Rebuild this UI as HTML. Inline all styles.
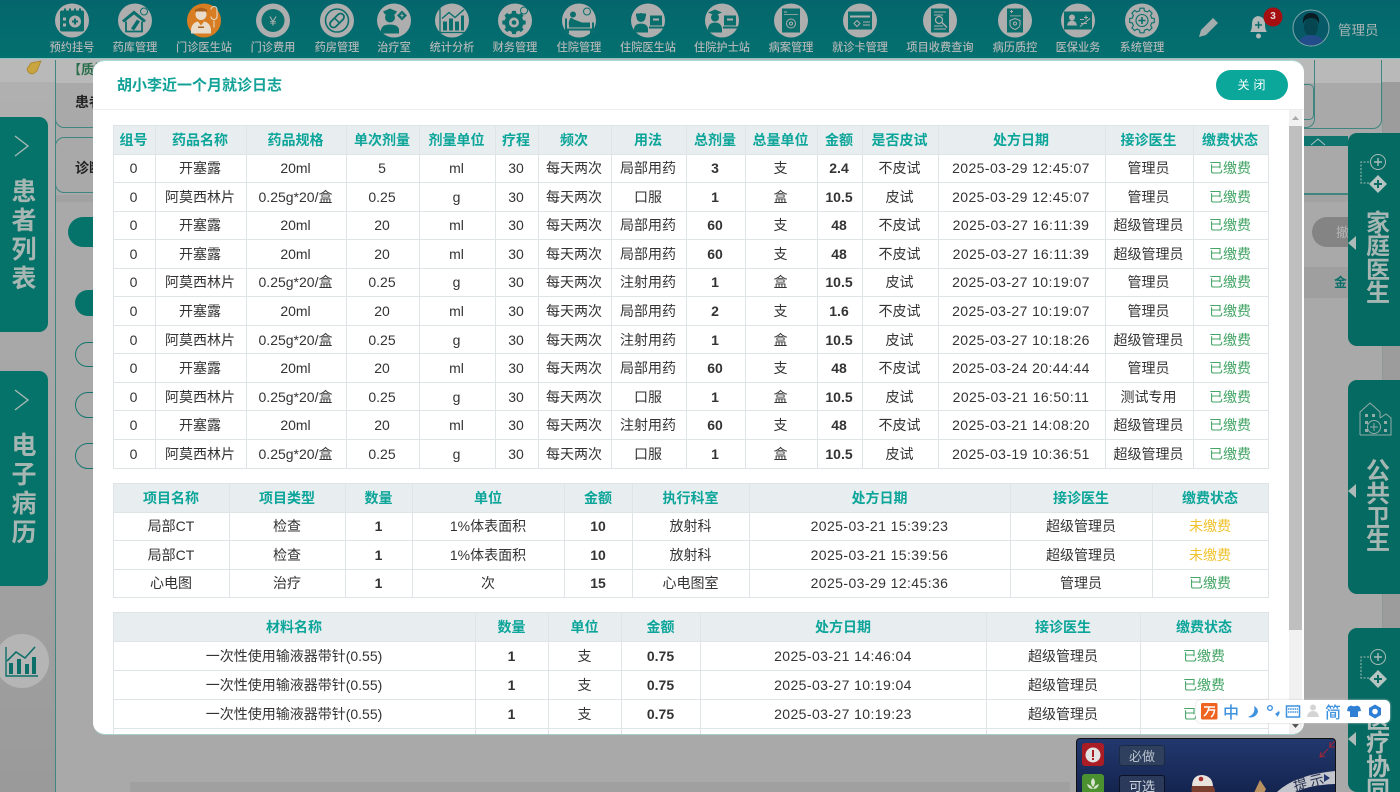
<!DOCTYPE html>
<html lang="zh"><head><meta charset="utf-8"><title>就诊日志</title>
<style>
*{box-sizing:border-box}
html{margin:0;width:1400px;height:792px;overflow:hidden;background:#a9a9a9}
body{margin:0;padding:0;width:1400px;height:792px;overflow:hidden;background:#a9a9a9;font-family:"Liberation Sans","Noto Sans CJK SC",sans-serif;filter:blur(.3px);position:relative}
.a{position:absolute}
#nav{left:0;top:0;width:1400px;height:59px;background:linear-gradient(#04666c,#04706f);border-bottom:1px solid #8fc2c0}
.lb{position:absolute;top:39px;width:110px;text-align:center;font-size:11.2px;line-height:16px;color:#b0b5b5;font-weight:500;font-family:"Noto Sans CJK SC",sans-serif;white-space:nowrap}
.side{position:absolute;background:#05736a;color:#a6b6b2;font-weight:700;text-align:center;font-family:"Noto Sans CJK SC",sans-serif}
.sl{left:0;width:48px;height:215px;border-radius:0 9px 9px 0;font-size:25px;line-height:29px;padding-top:59px}
.sr{left:1348px;width:52px;background:#056a62;border-radius:9px 0 0 9px;font-size:24px;line-height:23.4px;padding-left:8px;overflow:hidden}
.tri{position:absolute;left:1348px;width:0;height:0;border-top:7px solid transparent;border-bottom:7px solid transparent;border-right:8px solid #aebab7}
.pill{position:absolute;border:1px solid #17756f;background:#a9a9a9}
#modal{left:93px;top:60px;width:1211px;height:675px;background:#fff;border-radius:12px;overflow:hidden;border-top:1px solid #a9dcd8;border-bottom:1px solid #a7cfc9}
#title{left:24px;top:13px;font-size:15px;line-height:22px;font-weight:700;color:#12a297;font-family:"Noto Sans CJK SC",sans-serif}
#hr{left:0;top:48px;width:1211px;height:1px;background:#eceeee}
#close{left:1123px;top:9px;width:72px;height:30px;border-radius:15px;background:#0ba79b;color:#fff;text-align:center;font-size:12px;line-height:30px;letter-spacing:4px;padding-left:3px;font-family:"Noto Sans CJK SC",sans-serif}
table{position:absolute;left:20px;border-collapse:collapse;table-layout:fixed;font-size:14px;color:#333;font-family:"Liberation Sans","Noto Sans CJK SC",sans-serif}
th,td{border:1px solid #dfe4e6;padding:0 1px 0 0;text-align:center;overflow:hidden;white-space:nowrap;line-height:20px}
.t1 th,.t1 td{padding-right:2px}
th{background:#e8edf0;color:#0ca599;font-weight:700;font-size:14px;font-family:"Noto Sans CJK SC",sans-serif;height:28.5px}
td{height:28.55px}
.t3 td{height:29.1px}
td.b{font-weight:700}
td.d{letter-spacing:.41px}
td.g{color:#44a566}
td.y{color:#f0c22e}
</style></head><body>

<div class="a" style="left:0;top:59px;width:1400px;height:24px;background:#b9b9b9"></div>
<div class="a" style="left:0;top:82px;width:55px;height:710px;background:linear-gradient(#b0b0b0,#9a9a9a)"></div>
<div class="a" style="left:55px;top:82px;width:1px;height:710px;background:#3f8580"></div>
<div class="a" style="left:1382px;top:82px;width:18px;height:710px;background:#9c9c9c;border-left:1px solid #8c9a98"></div>
<div class="a" style="left:56px;top:195px;width:1325px;height:7px;background:#a2a2a2"></div>

<svg class="a" style="left:26px;top:60px" width="16" height="16" viewBox="0 0 16 16"><path d="M15 1 L5 3 L1 9 Q2 14 7 14 L11 11 Z" fill="#c9a43f" stroke="#a5832a" stroke-width=".7"/></svg>
<div class="a" style="left:68px;top:60px;font-size:13px;line-height:18px;color:#2b6e4c;font-weight:700;font-family:'Noto Sans CJK SC',sans-serif">【质控</div>
<div class="pill" style="left:55px;top:60px;width:1260px;height:68px;border-radius:0 0 9px 9px;border-top:0;background:none;border-color:#3f8580"></div>
<div class="a" style="left:75px;top:92px;font-size:14px;line-height:20px;font-weight:700;color:#222;font-family:'Noto Sans CJK SC',sans-serif">患者</div>
<div class="pill" style="left:55px;top:137px;width:60px;height:56px;border-radius:9px;background:none;border-color:#3f8580"></div>
<div class="a" style="left:75px;top:158px;font-size:14px;line-height:20px;font-weight:700;color:#222;font-family:'Noto Sans CJK SC',sans-serif">诊断</div>
<div class="a" style="left:1304px;top:84px;width:10px;height:36px;border:1px solid #3f8580;border-left:0;border-radius:0 5px 5px 0"></div>
<div class="a" style="left:1304px;top:60px;width:78px;height:69px;border:1px solid #3f8580;border-left:0;border-top:0;border-radius:0 0 9px 0"></div>
<div class="a" style="left:1304px;top:136px;width:44px;height:10px;background:#0f736e"></div>
<svg class="a" style="left:1310px;top:137px" width="16" height="9"><path d="M1 8 L8 2 L15 8" fill="none" stroke="#a9c2bf" stroke-width="1"/></svg>
<div class="a" style="left:1304px;top:193px;width:45px;height:2px;background:#3f8580"></div>
<div class="a" style="left:1312px;top:217px;width:50px;height:30px;border-radius:15px;background:#848484;color:#b5b5b5;font-size:13px;line-height:30px;padding-left:24px;font-family:'Noto Sans CJK SC',sans-serif;overflow:hidden">撤</div>
<div class="a" style="left:1304px;top:267px;width:45px;height:31px;background:#9f9f9f;color:#0d6f69;font-size:13px;line-height:30px;padding-left:30px;font-weight:700;font-family:'Noto Sans CJK SC',sans-serif;overflow:hidden">金</div>

<div class="a" style="left:68px;top:217px;width:40px;height:30px;border-radius:15px;background:#05736a"></div>
<div class="a" style="left:75px;top:290px;width:40px;height:26px;border-radius:13px;background:#05736a"></div>
<div class="pill" style="left:75px;top:342px;width:40px;height:25px;border-radius:13px"></div>
<div class="pill" style="left:75px;top:392px;width:40px;height:26px;border-radius:13px"></div>
<div class="pill" style="left:75px;top:443px;width:40px;height:26px;border-radius:13px"></div>

<div class="side sl" style="top:117px">患<br>者<br>列<br>表</div>
<svg class="a" style="left:13px;top:134px" width="18" height="24"><path d="M2 2 L15 12 L2 22" fill="none" stroke="#a4b8b4" stroke-width="1.4"/></svg>
<div class="side sl" style="top:371px">电<br>子<br>病<br>历</div>
<svg class="a" style="left:13px;top:388px" width="18" height="24"><path d="M2 2 L15 12 L2 22" fill="none" stroke="#a4b8b4" stroke-width="1.4"/></svg>
<svg class="a" style="left:0;top:633px" width="50" height="56" viewBox="0 0 50 56"><circle cx="22" cy="28" r="27" fill="#b5b5b5"/><path d="M6 14 V43 H38" fill="none" stroke="#0d6f69" stroke-width="1.4"/><path d="M9 41 V30 h4 v11zM17 41 V26 h4 v15zM25 41 V31 h4 v10zM32 41 V24 h4 v17z" fill="#0d6f69"/><path d="M7 28 L16 19 L25 25 L35 14" fill="none" stroke="#0d6f69" stroke-width="1.6"/></svg>

<div class="side sr" style="top:133px;height:213px;padding-top:76px">家<br>庭<br>医<br>生</div>
<svg class="a" style="left:1358px;top:150px" width="40" height="48" viewBox="0 0 40 48" fill="none" stroke="#a8bdb9"><circle cx="20" cy="12" r="7.5"/><path d="M16 12h8M20 8v8" stroke-width="1.4"/><path d="M11 12 H3 V33 H11" stroke-dasharray="2 1.5"/><path d="M20 25 L29 34 L20 43 L11 34Z" fill="#b6c4c1" stroke="none"/><path d="M16 34h8M20 30v8" stroke="#056a62" stroke-width="2"/></svg>
<div class="tri" style="top:236px"></div>
<div class="side sr" style="top:380px;height:214px;padding-top:77px">公<br>共<br>卫<br>生</div>
<svg class="a" style="left:1358px;top:400px" width="36" height="40" viewBox="0 0 36 40" fill="none" stroke="#93aca8"><path d="M2 35 V12 L12 3 L22 12 V18 M22 18 L28 14 L33 18 V35 H2"/><circle cx="16" cy="27" r="6.5"/><path d="M12 27h8M16 23v8"/><path d="M7 14h3v3H7zM14 14h3v3h-3zM7 21h3v3H7zM7 29h3v3H7zM26 21h3v3h-3zM26 29h3v3h-3z" fill="#93aca8" stroke="none"/></svg>
<div class="tri" style="top:484px"></div>
<div class="side sr" style="top:628px;height:164px;padding-top:78px;color:#aebcb9">医<br>疗<br>协<br>同</div>
<svg class="a" style="left:1358px;top:645px" width="40" height="48" viewBox="0 0 40 48" fill="none" stroke="#a8bdb9"><circle cx="20" cy="12" r="7.5"/><path d="M16 12h8M20 8v8" stroke-width="1.4"/><path d="M11 12 H3 V33 H11" stroke-dasharray="2 1.5"/><path d="M20 25 L29 34 L20 43 L11 34Z" fill="#b6c4c1" stroke="none"/><path d="M16 34h8M20 30v8" stroke="#056a62" stroke-width="2"/></svg>
<div class="tri" style="top:732px"></div>

<div id="nav" class="a">
<svg class="a" style="left:0;top:0" width="1400" height="48" viewBox="0 0 1400 48">
<g fill="#aeaeae"><circle cx="72" cy="20.5" r="17"/><circle cx="135" cy="20.5" r="17"/><circle cx="204" cy="20.5" r="17" fill="#d87d21"/><circle cx="273" cy="20.5" r="17"/><circle cx="337" cy="20.5" r="17"/><circle cx="394" cy="20.5" r="17"/><circle cx="452" cy="20.5" r="17"/><circle cx="515" cy="20.5" r="17"/><circle cx="579" cy="20.5" r="17"/><circle cx="648" cy="20.5" r="17"/><circle cx="722" cy="20.5" r="17"/><circle cx="791" cy="20.5" r="17"/><circle cx="860" cy="20.5" r="17"/><circle cx="940" cy="20.5" r="17"/><circle cx="1015" cy="20.5" r="17"/><circle cx="1078" cy="20.5" r="17"/><circle cx="1142" cy="20.5" r="17"/></g>
<g fill="#0a6f6c" stroke="none">
<g transform="translate(72 20.5)"><path d="M-12-8a2 2 0 0 1 2-2h20a2 2 0 0 1 2 2v17a2 2 0 0 1-2 2h-20a2 2 0 0 1-2-2z"/><path d="M-8-12h2v4h-2zM-3-12h2v4h-2zM2-12h2v4h-2zM7-12h2v4h-2z"/><circle cx="3" cy="1" r="6" fill="#aeaeae"/><path d="M0 0h6v2H0zM2 -2h2v6H2z"/><path d="M-9-3h3v3h-3zM-9 3h3v3h-3z" fill="#aeaeae"/></g>
<g transform="translate(135 20.5)"><path d="M-13 0 L-1-10 L11 0 L9 2 L-1-6 L-11 2Z"/><path d="M-9 1 V11 H7 V1" fill="none" stroke="#0a6f6c" stroke-width="1.8"/><path d="M-4 8 L2-1 L5 1 L-1 10Z"/><circle cx="9" cy="-9" r="3.5" fill="none" stroke="#0a6f6c"/></g>
<g transform="translate(204 20.5)" fill="#e9dccb"><circle cx="-3" cy="-6" r="5.5"/><path d="M-9-9h12v-2l-6-2-6 2z" fill="#a8611c"/><path d="M-13 13 V9 Q-12 2-6 1 L-3 5 L0 1 Q6 2 7 9 V13Z"/><path d="M7-11 a3 3 0 0 1 6 0 V-4 a3 3 0 0 1-6 0" fill="none" stroke="#e9dccb" stroke-width="1.100"/><path d="M10 0 V7" stroke="#e9dccb"/><path d="M-6 6h6v1.500h-6z" fill="#a8611c"/></g>
<g transform="translate(273 20.5)"><circle r="11.500"/></g>
<g transform="translate(337 20.5)"><circle r="11.500" fill="none" stroke="#0a6f6c" stroke-width="1.6"/><g transform="rotate(-45)"><rect x="-8.500" y="-3.500" width="17" height="7" rx="3.500" fill="none" stroke="#0a6f6c" stroke-width="1.8"/><path d="M0-3.500V3.500" stroke="#0a6f6c" stroke-width="1.600"/></g></g>
<g transform="translate(394 20.500)"><circle cx="-4" cy="-3" r="5"/><path d="M-11-9 L-4-12 L3-9 L1-6h-10z"/><path d="M-13 13 V9 Q-12 4-4 4 Q4 4 5 9 V13Z"/><path d="M8-10 L13-5 L8 0 L3-5Z"/><path d="M6.500-5.500h3v1h-3zM7.500-7h1v4h-1z" fill="#aeaeae"/></g>
<g transform="translate(452 20.500)"><path d="M-12-12V12H13" fill="none" stroke="#0a6f6c" stroke-width="1.300"/><path d="M-9 10V1h4v9zM-3 10V-2h4v12zM3 10V1h4v9zM9 10V-5h3v15z"/><path d="M-10-2L-3-8L3-3L12-11" fill="none" stroke="#0a6f6c" stroke-width="1.400"/></g>
<g transform="translate(515 20.500)"><path transform="translate(-1 2) scale(.95)" d="M9.700-2.400L12.300-2L12.300 2L9.700 2.400L8.600 5.200L10.100 7.300L7.300 10.100L5.200 8.600L2.400 9.700L2 12.300L-2 12.300L-2.400 9.700L-5.200 8.600L-7.300 10.100L-10.100 7.300L-8.600 5.200L-9.700 2.400L-12.300 2L-12.300-2L-9.700-2.400L-8.600-5.200L-10.100-7.300L-7.300-10.100L-5.200-8.600L-2.400-9.700L-2-12.300L2-12.300L2.400-9.700L5.200-8.600L7.300-10.100L10.100-7.300L8.600-5.200Z"/><circle cx="-1" cy="2" r="5" fill="#aeaeae"/><circle cx="-1" cy="2" r="2.300"/><circle cx="9" cy="-10" r="3.500" fill="#aeaeae" stroke="#0a6f6c"/></g>
<g transform="translate(579 20.500)"><path d="M-13-2V12h2V9H12v3h2V2" fill="none" stroke="#0a6f6c" stroke-width="2"/><path d="M-10 6 Q-11 0-8-3 L-5-1 L3 2 L11 2 V7 H-10Z"/><circle cx="-6" cy="-6" r="3"/><circle cx="8" cy="-9" r="3.500" fill="none" stroke="#0a6f6c"/></g>
<g transform="translate(648 20.500)"><circle cx="-7" cy="-3" r="4.500"/><path d="M-12-7h10v3h-10z"/><path d="M-14 12V8Q-13 3-7 3Q-1 3 0 8V12Z"/><path d="M2-5h12V5H2zM1 6h15v2H1z"/><path d="M5-2h6v2H5z" fill="#aeaeae"/></g>
<g transform="translate(722 20.500)"><circle cx="-7" cy="-3" r="4"/><path d="M-14-8L-7-11L0-8L-7-5Z"/><path d="M-14 12V8Q-13 2-7 2Q-1 2 0 8V12Z"/><path d="M2-5h12V5H2zM1 6h15v2H1z"/><path d="M5-2h6v2H5z" fill="#aeaeae"/></g>
<g transform="translate(791 20.500)"><path d="M-9-12H9V12H-9z"/><path d="M-7-9h3v1h-3zM-7-6.500H7v.7H-7z" fill="#aeaeae"/><circle cy="3" r="4.500" fill="none" stroke="#aeaeae"/><circle cy="3" r="1.500" fill="none" stroke="#aeaeae"/></g>
<g transform="translate(860 20.500)"><path d="M-12-9h24V9h-24z"/><path d="M-10-5H10v2H-10z" fill="#aeaeae"/><path d="M-6 3L-3 0L0 3L-3 6Z" fill="none" stroke="#aeaeae"/><path d="M3 1h7v1H3zM3 4h7v1H3z" fill="#aeaeae"/></g>
<g transform="translate(940 20.500)"><path d="M-9-12H9V12H-9z"/><path d="M-6-9H6v1H-6zM-6-6H3v1H-6zM-6 5H3v1H-6zM-6 8H6v1H-6z" fill="#aeaeae"/><circle cx="-1" cy="-.5" r="3.500" fill="none" stroke="#aeaeae" stroke-width="1.200"/><path d="M2 2L7 7" stroke="#aeaeae" stroke-width="1.400"/></g>
<g transform="translate(1015 20.500)"><path d="M-8-12H8V12H-8z"/><path d="M-5-9h3M-3.500-10.500v3" stroke="#aeaeae"/><path d="M-5-5H6v.8H-5z" fill="#aeaeae"/><path d="M0-2L5 0V4Q5 7 0 9Q-5 7-5 4V0Z" fill="none" stroke="#aeaeae"/><circle cy="3" r="1.500" fill="none" stroke="#aeaeae"/></g>
<g transform="translate(1078 20.500)"><path d="M-14-9H14V9H-14z"/><circle cx="-6" cy="-3" r="3" fill="#aeaeae"/><path d="M-11 5Q-10 0-6 0Q-2 0-1 5Z" fill="#aeaeae"/><path d="M2-1h4M3 3h6M8-5v4M6-3h4M2 6L12-2" stroke="#aeaeae" stroke-width="1.100"/></g>
<g transform="translate(1142 20.500)" fill="none" stroke="#0a6f6c" stroke-width="1.100"><path d="M9.700-2.400L12.300-2L12.300 2L9.700 2.400L8.600 5.200L10.100 7.300L7.300 10.100L5.200 8.600L2.400 9.700L2 12.300L-2 12.300L-2.400 9.700L-5.200 8.600L-7.300 10.100L-10.100 7.300L-8.600 5.200L-9.700 2.400L-12.300 2L-12.300-2L-9.700-2.400L-8.600-5.200L-10.100-7.300L-7.300-10.100L-5.200-8.600L-2.400-9.700L-2-12.300L2-12.300L2.400-9.700L5.200-8.600L7.300-10.100L10.100-7.300L8.600-5.200Z"/><circle r="6"/><path d="M-3.500 0h7M0-3.500v7" stroke-width="1.600"/></g>
</g>
<text x="273" y="25.500" text-anchor="middle" font-size="13" fill="#aeaeae" font-family="Liberation Sans">¥</text>
<path d="M1199 37 L1201 30 L1213 18 L1218 23 L1206 35Z" fill="#a4adad"/>
<path d="M1250 32 Q1252 30 1252 24 Q1252 17 1258 16 Q1265 17 1265 24 Q1265 30 1267 32Z" fill="#b3b8b8"/><circle cx="1258.500" cy="36" r="2.500" fill="#b3b8b8"/><path d="M1255 25h7M1258.500 21.500v7" stroke="#0a6f6c" stroke-width="1.500"/>
<circle cx="1273" cy="17" r="9.500" fill="#a50f10"/>
<circle cx="1311" cy="28" r="18" fill="#065a68" stroke="#7fa6ab" stroke-width="1"/>
<ellipse cx="1311" cy="27" rx="7" ry="9.500" fill="#064650"/><path d="M1303 24 Q1302 13 1311 13 Q1320 13 1319 24 Q1317 18 1311 18 Q1305 18 1303 24Z" fill="#0b1d24"/>
<path d="M1299 41 Q1303 35 1311 35 Q1319 35 1323 41 Q1318 45.500 1311 45.500 Q1304 45.500 1299 41Z" fill="#234d8a"/>
</svg>
<div class="a" style="left:1268px;top:10px;width:10px;text-align:center;font-size:10px;line-height:14px;font-weight:700;color:#e8d8d8">3</div>
<div class="a" style="left:1338px;top:19px;font-size:13.500px;line-height:20px;color:#aab4b5;font-family:'Noto Sans CJK SC',sans-serif">管理员</div>
<div class="lb" style="left:17px">预约挂号</div><div class="lb" style="left:80px">药库管理</div><div class="lb" style="left:149px">门诊医生站</div><div class="lb" style="left:218px">门诊费用</div><div class="lb" style="left:282px">药房管理</div><div class="lb" style="left:339px">治疗室</div><div class="lb" style="left:397px">统计分析</div><div class="lb" style="left:460px">财务管理</div><div class="lb" style="left:524px">住院管理</div><div class="lb" style="left:593px">住院医生站</div><div class="lb" style="left:667px">住院护士站</div><div class="lb" style="left:736px">病案管理</div><div class="lb" style="left:805px">就诊卡管理</div><div class="lb" style="left:885px">项目收费查询</div><div class="lb" style="left:960px">病历质控</div><div class="lb" style="left:1023px">医保业务</div><div class="lb" style="left:1087px">系统管理</div>
</div>

<div id="modal" class="a">
<div id="title" class="a">胡小李近一个月就诊日志</div>
<div id="hr" class="a"></div>
<div id="close" class="a">关闭</div>

<table class="t1" style="top:64px;width:1155px">
<colgroup><col style="width:42px"><col style="width:91px"><col style="width:100px"><col style="width:73px"><col style="width:76px"><col style="width:43px"><col style="width:73px"><col style="width:75px"><col style="width:59px"><col style="width:72px"><col style="width:45px"><col style="width:76px"><col style="width:167px"><col style="width:88px"><col style="width:75px"></colgroup>
<tr><th>组号</th><th>药品名称</th><th>药品规格</th><th>单次剂量</th><th>剂量单位</th><th>疗程</th><th>频次</th><th>用法</th><th>总剂量</th><th>总量单位</th><th>金额</th><th>是否皮试</th><th>处方日期</th><th>接诊医生</th><th>缴费状态</th></tr>
<tr><td>0</td><td>开塞露</td><td>20ml</td><td>5</td><td>ml</td><td>30</td><td>每天两次</td><td>局部用药</td><td class="b">3</td><td>支</td><td class="b">2.4</td><td>不皮试</td><td class="d">2025-03-29 12:45:07</td><td>管理员</td><td class="g">已缴费</td></tr>
<tr><td>0</td><td>阿莫西林片</td><td>0.25g*20/盒</td><td>0.25</td><td>g</td><td>30</td><td>每天两次</td><td>口服</td><td class="b">1</td><td>盒</td><td class="b">10.5</td><td>皮试</td><td class="d">2025-03-29 12:45:07</td><td>管理员</td><td class="g">已缴费</td></tr>
<tr><td>0</td><td>开塞露</td><td>20ml</td><td>20</td><td>ml</td><td>30</td><td>每天两次</td><td>局部用药</td><td class="b">60</td><td>支</td><td class="b">48</td><td>不皮试</td><td class="d">2025-03-27 16:11:39</td><td>超级管理员</td><td class="g">已缴费</td></tr>
<tr><td>0</td><td>开塞露</td><td>20ml</td><td>20</td><td>ml</td><td>30</td><td>每天两次</td><td>局部用药</td><td class="b">60</td><td>支</td><td class="b">48</td><td>不皮试</td><td class="d">2025-03-27 16:11:39</td><td>超级管理员</td><td class="g">已缴费</td></tr>
<tr><td>0</td><td>阿莫西林片</td><td>0.25g*20/盒</td><td>0.25</td><td>g</td><td>30</td><td>每天两次</td><td>注射用药</td><td class="b">1</td><td>盒</td><td class="b">10.5</td><td>皮试</td><td class="d">2025-03-27 10:19:07</td><td>管理员</td><td class="g">已缴费</td></tr>
<tr><td>0</td><td>开塞露</td><td>20ml</td><td>20</td><td>ml</td><td>30</td><td>每天两次</td><td>局部用药</td><td class="b">2</td><td>支</td><td class="b">1.6</td><td>不皮试</td><td class="d">2025-03-27 10:19:07</td><td>管理员</td><td class="g">已缴费</td></tr>
<tr><td>0</td><td>阿莫西林片</td><td>0.25g*20/盒</td><td>0.25</td><td>g</td><td>30</td><td>每天两次</td><td>注射用药</td><td class="b">1</td><td>盒</td><td class="b">10.5</td><td>皮试</td><td class="d">2025-03-27 10:18:26</td><td>超级管理员</td><td class="g">已缴费</td></tr>
<tr><td>0</td><td>开塞露</td><td>20ml</td><td>20</td><td>ml</td><td>30</td><td>每天两次</td><td>局部用药</td><td class="b">60</td><td>支</td><td class="b">48</td><td>不皮试</td><td class="d">2025-03-24 20:44:44</td><td>管理员</td><td class="g">已缴费</td></tr>
<tr><td>0</td><td>阿莫西林片</td><td>0.25g*20/盒</td><td>0.25</td><td>g</td><td>30</td><td>每天两次</td><td>口服</td><td class="b">1</td><td>盒</td><td class="b">10.5</td><td>皮试</td><td class="d">2025-03-21 16:50:11</td><td>测试专用</td><td class="g">已缴费</td></tr>
<tr><td>0</td><td>开塞露</td><td>20ml</td><td>20</td><td>ml</td><td>30</td><td>每天两次</td><td>注射用药</td><td class="b">60</td><td>支</td><td class="b">48</td><td>不皮试</td><td class="d">2025-03-21 14:08:20</td><td>超级管理员</td><td class="g">已缴费</td></tr>
<tr><td>0</td><td>阿莫西林片</td><td>0.25g*20/盒</td><td>0.25</td><td>g</td><td>30</td><td>每天两次</td><td>口服</td><td class="b">1</td><td>盒</td><td class="b">10.5</td><td>皮试</td><td class="d">2025-03-19 10:36:51</td><td>超级管理员</td><td class="g">已缴费</td></tr>
</table>

<table style="top:422px;width:1155px">
<colgroup><col style="width:116px"><col style="width:116px"><col style="width:67px"><col style="width:152px"><col style="width:68px"><col style="width:117px"><col style="width:261px"><col style="width:142px"><col style="width:116px"></colgroup>
<tr><th>项目名称</th><th>项目类型</th><th>数量</th><th>单位</th><th>金额</th><th>执行科室</th><th>处方日期</th><th>接诊医生</th><th>缴费状态</th></tr>
<tr><td>局部CT</td><td>检查</td><td class="b">1</td><td>1%体表面积</td><td class="b">10</td><td>放射科</td><td class="d">2025-03-21 15:39:23</td><td>超级管理员</td><td class="y">未缴费</td></tr>
<tr><td>局部CT</td><td>检查</td><td class="b">1</td><td>1%体表面积</td><td class="b">10</td><td>放射科</td><td class="d">2025-03-21 15:39:56</td><td>超级管理员</td><td class="y">未缴费</td></tr>
<tr><td>心电图</td><td>治疗</td><td class="b">1</td><td>次</td><td class="b">15</td><td>心电图室</td><td class="d">2025-03-29 12:45:36</td><td>管理员</td><td class="g">已缴费</td></tr>
</table>

<table class="t3" style="top:551px;width:1155px">
<colgroup><col style="width:362px"><col style="width:73px"><col style="width:73px"><col style="width:79px"><col style="width:286px"><col style="width:154px"><col style="width:128px"></colgroup>
<tr><th>材料名称</th><th>数量</th><th>单位</th><th>金额</th><th>处方日期</th><th>接诊医生</th><th>缴费状态</th></tr>
<tr><td>一次性使用输液器带针(0.55)</td><td class="b">1</td><td>支</td><td class="b">0.75</td><td class="d">2025-03-21 14:46:04</td><td>超级管理员</td><td class="g">已缴费</td></tr>
<tr><td>一次性使用输液器带针(0.55)</td><td class="b">1</td><td>支</td><td class="b">0.75</td><td class="d">2025-03-27 10:19:04</td><td>超级管理员</td><td class="g">已缴费</td></tr>
<tr><td>一次性使用输液器带针(0.55)</td><td class="b">1</td><td>支</td><td class="b">0.75</td><td class="d">2025-03-27 10:19:23</td><td>超级管理员</td><td class="g">已缴费</td></tr>
<tr><td></td><td></td><td></td><td></td><td></td><td></td><td></td></tr>
</table>

<div class="a" style="left:1196px;top:49px;width:13px;height:625px;background:#f1f1f1"></div>
<div class="a" style="left:1196px;top:65px;width:13px;height:504px;background:#bfbfbf"></div>
<svg class="a" style="left:1196px;top:52px" width="13" height="10"><path d="M3 7L6.500 3L10 7Z" fill="#a9a9a9"/></svg>
<svg class="a" style="left:1196px;top:660px" width="13" height="10"><path d="M3 3L6.500 7L10 3Z" fill="#505050"/></svg>
</div>

<div class="a" style="left:1196px;top:700px;width:194px;height:23px;background:#fff;border-radius:5px;box-shadow:0 0 2px #ccc"></div>
<svg class="a" style="left:1196px;top:700px" width="194" height="23" viewBox="0 0 194 23"><rect x="5" y="3" width="16.500" height="16.500" rx="1.500" fill="#ee6420"/><path d="M8 7h11M13 7 Q12 13 8 16M12.500 10h6Q18 15 15 17" fill="none" stroke="#fff" stroke-width="1.500"/><path d="M58 6 Q60 14 52 17 Q59 19 62 12 Q62 8 58 6Z" fill="#3f92de"/><circle cx="74" cy="8" r="2.300" fill="none" stroke="#3f92de" stroke-width="1.400"/><path d="M83 11 Q85 13 81 17 Q81 15 79 14Z" fill="#3f92de"/><rect x="90.500" y="6" width="13" height="11" fill="none" stroke="#3f92de" stroke-width="1.500"/><path d="M92 9h10M92 12h10" stroke="#3f92de" stroke-width="1.600" stroke-dasharray="1.500 .7"/><circle cx="117" cy="7.500" r="3" fill="#d4d4d4"/><path d="M111 17 Q112 11 117 11 Q122 11 123 17Z" fill="#d4d4d4"/><path d="M152 7 L155 5.500 Q158 7 161 5.500 L164 7 L165 11 L162 11.500 V17 H154 V11.500 L151 11Z" fill="#2f7fd5"/><path d="M179 4.500 L185 8 V15 L179 18.500 L173 15 V8Z" fill="#2f7fd5"/><circle cx="179" cy="11.500" r="2.800" fill="#fff"/></svg>
<div class="a" style="left:1223px;top:701px;font-size:16px;line-height:20px;color:#3f92de;font-weight:500;font-family:'Noto Sans CJK SC',sans-serif">中</div>
<div class="a" style="left:1325px;top:701px;font-size:16px;line-height:20px;color:#3f92de;font-weight:500;font-family:'Noto Sans CJK SC',sans-serif">简</div>

<div class="a" style="left:1076px;top:738px;width:260px;height:54px;background:linear-gradient(#22386e,#14244f);border:1px solid #111;border-bottom:0;border-radius:4px 4px 0 0;overflow:hidden">
<div class="a" style="left:5px;top:4px;width:22px;height:23px;background:#ab1d24;border-radius:3px"></div>
<svg class="a" style="left:7px;top:7px" width="18" height="18"><circle cx="9" cy="9" r="7.500" fill="#e3e3e3"/><path d="M8 4h2v7H8zM8 12h2v2H8z" fill="#a91d23"/></svg>
<div class="a" style="left:5px;top:35px;width:22px;height:24px;background:#4c9130;border-radius:3px"></div>
<svg class="a" style="left:8px;top:37px" width="16" height="16"><path d="M8 2Q12 6 8 11Q4 6 8 2ZM2 8Q6 9 8 13Q3 13 2 8ZM14 8Q10 9 8 13Q13 13 14 8Z" fill="#d6e3cf"/></svg>
<div class="a" style="left:42px;top:6px;width:46px;height:21px;background:#2f405f;border:1px solid #1b2a45;border-radius:3px;color:#b7c1cc;font-size:13px;line-height:20px;text-align:center;font-family:'Noto Sans CJK SC',sans-serif">必做</div>
<div class="a" style="left:42px;top:36px;width:46px;height:21px;background:#2b3a5a;border:1px solid #0b1224;border-radius:3px;color:#cdd5df;font-size:13px;line-height:20px;text-align:center;font-family:'Noto Sans CJK SC',sans-serif">可选</div>
<svg class="a" style="left:0;top:0" width="260" height="54" viewBox="0 0 260 54"><path d="M243 18L251 10M248 17L243 18L244 13M258 2L252 8M253 3V8L258 8" fill="none" stroke="#93283a" stroke-width="1.200"/><path d="M115 48Q115 36 125 36Q136 37 136 48Z" fill="#e8e3dd"/><circle cx="124" cy="40" r="2.300" fill="#a82c2c"/><path d="M115 47Q113 54 118 56H136Q140 52 136 47Z" fill="#7a3f2e"/><path d="M176 56L183 41L189 50L186 56Z" fill="#b9905f"/><path d="M197 56 Q215 36 258 32 V45 Q228 46 214 56Z" fill="#c3c6cd"/></svg>
<div class="a" style="left:216px;top:35px;font-size:14px;line-height:16px;letter-spacing:3px;color:#2a3350;transform:rotate(-14deg);font-family:'Noto Sans CJK SC',sans-serif;white-space:nowrap">提示</div>
<svg class="a" style="left:246px;top:34px" width="8" height="10"><path d="M1 1L7 5L1 9Z" fill="#22386e"/></svg>
</div>
<div class="a" style="left:130px;top:782px;width:940px;height:10px;background:#a0a0a0"></div>
</body></html>
